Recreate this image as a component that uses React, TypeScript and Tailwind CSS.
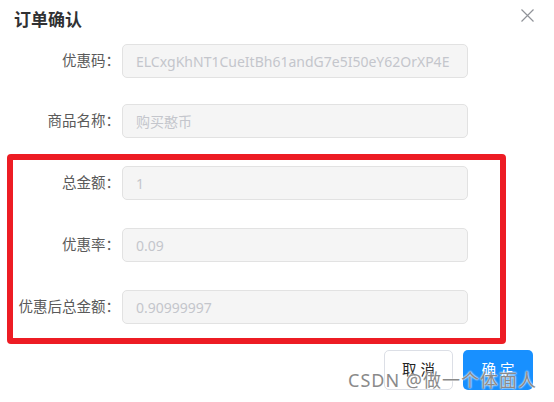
import React from 'react';

type Field = {
  label: string;
  value: string;
  gap: string;
};

const fields: Field[] = [
  { label: '优惠码：', value: 'ELCxgKhNT1CueItBh61andG7e5I50eY62OrXP4E', gap: 'mt-0' },
  { label: '商品名称：', value: '购买憨币', gap: 'mt-[26px]' },
  { label: '总金额：', value: '1', gap: 'mt-[28px]' },
  { label: '优惠率：', value: '0.09', gap: 'mt-[28px]' },
  { label: '优惠后总金额：', value: '0.90999997', gap: 'mt-[28px]' },
];

export default function App() {
  return (
    <div className="relative w-[554px] h-[402px] bg-white overflow-hidden font-['Noto_Sans','Noto_Sans_CJK_SC',sans-serif]">

      {/* Header */}
      <div className="flex items-start justify-between pl-[14px] pr-[20px] pt-[8px]">
        <h1 className="text-[17px] leading-[24px] font-bold text-[#303133]">订单确认</h1>
        <svg width="13" height="13" viewBox="0 0 13 13" className="mt-[1px] text-[#909399]">
          <path d="M0.5 0.5 12.5 12.5M12.5 0.5 0.5 12.5" stroke="currentColor" strokeWidth="1.2" fill="none" />
        </svg>
      </div>

      {/* Form */}
      <div className="flex flex-col mt-[12px]">
        {fields.map(f => (
          <div key={f.label} className={`flex items-center ${f.gap}`}>
            <label className="w-[120px] text-right text-[14.5px] text-[#5a5a5a] whitespace-nowrap">
              {f.label}
            </label>
            <div className="ml-[2px] w-[346px] h-[34px] flex items-center px-[13px] bg-[#f5f5f5] border border-[#e2e2e2] rounded-[5px] overflow-hidden">
              <span className="text-[14px] text-[#c4c6cc] whitespace-nowrap">{f.value}</span>
            </div>
          </div>
        ))}
      </div>

      {/* Footer */}
      <div className="flex justify-end gap-[10px] mt-[26px] pr-[21px]">
        <button className="w-[69px] h-[40px] rounded-[5px] border border-[#dcdfe6] bg-white text-[14.5px] text-[#222]">
          取 消
        </button>
        <button className="w-[70px] h-[40px] rounded-[5px] bg-[#1890ff] text-[14.5px] text-white">
          确 定
        </button>
      </div>

      {/* Red annotation box */}
      <div className="absolute left-[7px] top-[154px] w-[499px] h-[190px] border-[6px] border-[#ed1c24] rounded-[4px] pointer-events-none" />

      {/* Watermark */}
      <div className="absolute left-[348px] top-[367px] text-[18px] leading-[26px] tracking-[1px] text-[#8a8a8a] whitespace-nowrap [text-shadow:0_0_2px_#fff,0_0_2px_#fff]">
        CSDN @做一个体面人
      </div>
    </div>
  );
}
